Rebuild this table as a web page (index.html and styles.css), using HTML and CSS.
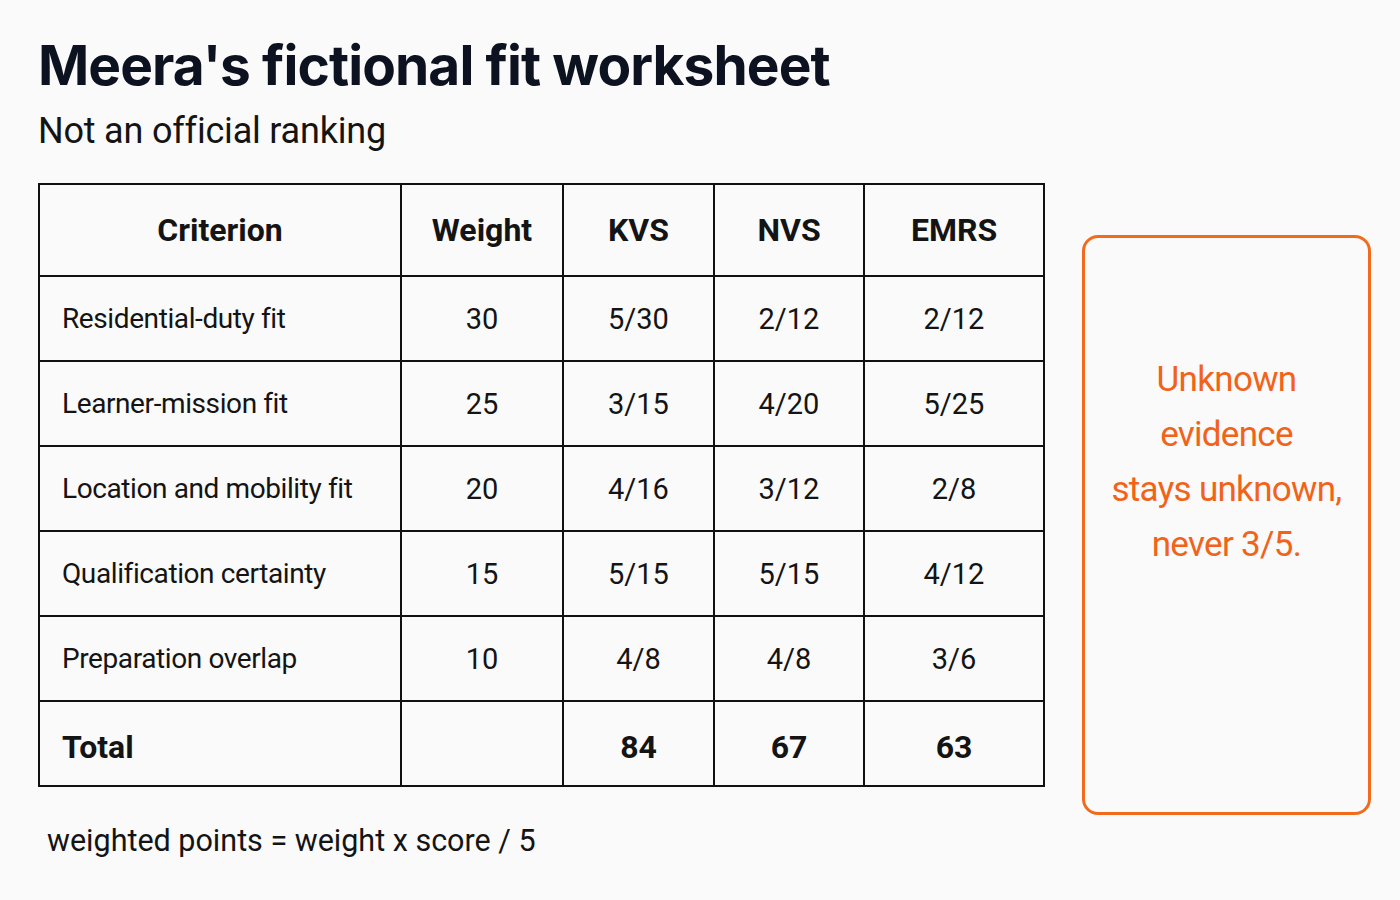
FILE: index.html
```html
<!DOCTYPE html>
<html lang="en">
<head>
<meta charset="utf-8">
<title>Meera's fictional fit worksheet</title>
<link rel="stylesheet" href="styles.css">
</head>
<body>
<main class="page">
  <header class="head">
    <h1 class="title">Meera's fictional fit worksheet</h1>
    <p class="subtitle">Not an official ranking</p>
  </header>
  <div class="content">
    <div class="left">
      <table class="sheet">
        <colgroup>
          <col class="c1"><col class="c2"><col class="c3"><col class="c4"><col class="c5">
        </colgroup>
        <thead>
          <tr><th>Criterion</th><th>Weight</th><th>KVS</th><th>NVS</th><th>EMRS</th></tr>
        </thead>
        <tbody>
          <tr><td class="crit">Residential-duty fit</td><td>30</td><td>5/30</td><td>2/12</td><td>2/12</td></tr>
          <tr><td class="crit">Learner-mission fit</td><td>25</td><td>3/15</td><td>4/20</td><td>5/25</td></tr>
          <tr><td class="crit">Location and mobility fit</td><td>20</td><td>4/16</td><td>3/12</td><td>2/8</td></tr>
          <tr><td class="crit">Qualification certainty</td><td>15</td><td>5/15</td><td>5/15</td><td>4/12</td></tr>
          <tr><td class="crit">Preparation overlap</td><td>10</td><td>4/8</td><td>4/8</td><td>3/6</td></tr>
          <tr class="total"><td class="crit">Total</td><td></td><td>84</td><td>67</td><td>63</td></tr>
        </tbody>
      </table>
      <p class="formula">weighted points = weight x score / 5</p>
    </div>
    <aside class="note">
      <p>Unknown<br>evidence<br>stays unknown,<br>never 3/5.</p>
    </aside>
  </div>
</main>
</body>
</html>
```

FILE: styles.css
```css
* { box-sizing: border-box; }
html, body { margin: 0; padding: 0; }
body {
  background: #fafafa;
  color: #111;
  font-family: Roboto, "Liberation Sans", sans-serif;
  width: 1400px;
  height: 900px;
  overflow: hidden;
}
.page {
  padding: 32px 0 0 38px;
}
.title {
  margin: 0;
  font-family: Inter, "Liberation Sans", sans-serif;
  font-weight: 700;
  font-size: 55px;
  line-height: 66px;
  color: #0d1220;
  letter-spacing: -0.9px;
}
.subtitle {
  margin: 8px 0 0 0;
  font-size: 36px;
  line-height: 50px;
  color: #141414;
  letter-spacing: -0.2px;
}
.content {
  display: flex;
  align-items: flex-start;
  margin-top: 27px;
}
.left {
  width: 1005px;
}
.sheet {
  border-collapse: collapse;
  width: 1005px;
  table-layout: fixed;
  border: 2px solid #111;
}
.c1 { width: 362px; }
.c2 { width: 162px; }
.c3 { width: 151px; }
.c4 { width: 150px; }
.c5 { width: 180px; }
.sheet th, .sheet td {
  border: 2px solid #111;
  text-align: center;
  padding: 0;
  font-size: 29px;
  color: #141414;
}
.sheet th {
  height: 92px;
  font-weight: 700;
  font-size: 32px;
}
.sheet td { height: 85px; }
.sheet td.crit {
  text-align: left;
  padding-left: 22px;
  font-size: 28px;
  letter-spacing: -0.4px;
}
.sheet .total td {
  font-weight: 700;
  font-size: 32px;
  height: 85px;
  padding-top: 6px;
  letter-spacing: 0;
}
.formula {
  margin: 34px 0 0 9px;
  font-size: 30.5px;
  line-height: 40px;
  color: #141414;
}
.note {
  margin: 52px 0 0 39px;
  width: 289px;
  height: 580px;
  border: 3px solid #f26b1d;
  border-radius: 16px;
  display: flex;
  align-items: center;
  justify-content: center;
}
.note p {
  margin: 0 0 126px 0;
  text-align: center;
  color: #f2631a;
  font-size: 35px;
  line-height: 55px;
  letter-spacing: -0.7px;
}
```
